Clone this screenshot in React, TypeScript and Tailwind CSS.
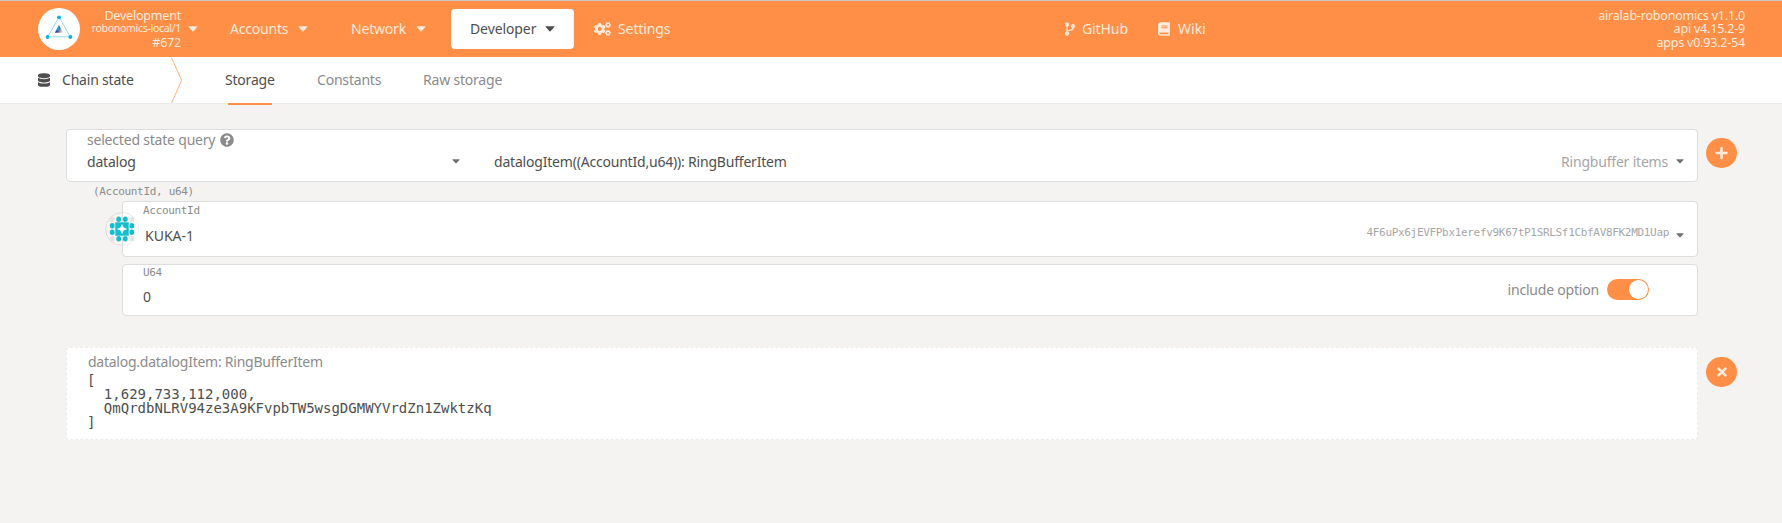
import React from 'react';
import { FaBook, FaCodeBranch, FaCogs, FaDatabase, FaPlus, FaQuestionCircle, FaTimes } from 'react-icons/fa';

function Caret({ className }: { className: string }) {
  return (
    <svg viewBox="0 0 10 6" className={`shrink-0 ${className}`} fill="currentColor">
      <path d="M0.9 0.3H9.1Q9.9 0.4 9.3 1.1L5.5 5.3Q5 5.8 4.5 5.3L0.7 1.1Q0.1 0.4 0.9 0.3Z" />
    </svg>
  );
}

function Logo() {
  return (
    <svg viewBox="0 0 42 42" className="h-[42px] w-[42px] shrink-0">
      <defs>
        <linearGradient id="peak" x1="0" y1="0" x2="1" y2="0.3">
          <stop offset="0" stopColor="#23375f" />
          <stop offset="0.5" stopColor="#44496f" />
          <stop offset="1" stopColor="#d9d0e4" />
        </linearGradient>
      </defs>
      <circle cx="21" cy="21" r="21" fill="#fff" />
      <path d="M21 9 L9.8 28.8 H32.2 Z" fill="none" stroke="#8fdcf5" strokeWidth="1" />
      <path d="M21 17.3 L16.8 24.7 H25.2 Z" fill="url(#peak)" />
      <path d="M21 17.3 L17.6 23.2 L21.2 22 Z" fill="#1f9fd8" />
      <circle cx="21" cy="9.3" r="1.9" fill="#03b1ea" />
      <circle cx="9.6" cy="29" r="1.9" fill="#03b1ea" />
      <circle cx="32.4" cy="29" r="1.9" fill="#03b1ea" />
    </svg>
  );
}

const IDENTICON_DOTS: [number, number, string][] = [
  [7.2, 7.2, '#e3e3e3'], [26.8, 7.2, '#e3e3e3'], [7.2, 26.8, '#e3e3e3'], [26.8, 26.8, '#e3e3e3'],
  [13.7, 7.2, '#12bfcd'], [20.3, 7.2, '#12bfcd'], [13.7, 26.8, '#12bfcd'], [20.3, 26.8, '#12bfcd'],
  [7.2, 13.7, '#12bfcd'], [7.2, 20.3, '#12bfcd'], [26.8, 13.7, '#12bfcd'], [26.8, 20.3, '#12bfcd'],
];

function Identicon() {
  return (
    <svg viewBox="0 0 34 34" className="absolute top-[10px] -left-[18px] h-[34px] w-[34px]">
      <circle cx="17" cy="17" r="16.4" fill="#f6f6f5" stroke="#dddddd" strokeWidth="1" />
      <path d="M17.5 1A16 16 0 0 1 17.5 33Z" fill="#fff" />
      <path d="M17.5 1V33" stroke="#dedede" />
      {IDENTICON_DOTS.map(([x, y, color]) => (
        <ellipse key={`${x}-${y}`} cx={x} cy={y} rx="2.4" ry="2.7" fill={color} />
      ))}
      <rect x="10.3" y="10.3" width="13.4" height="13.4" fill="#12bfcd" />
      <path d="M17 11.7 L18.6 15.4 L22.3 17 L18.6 18.6 L17 22.3 L15.4 18.6 L11.7 17 L15.4 15.4 Z" fill="#fff" />
    </svg>
  );
}

function Header() {
  return (
    <header className="flex h-[57px] items-center border-t border-[#c8c8c4] bg-[#ff8f47] pl-[38px] text-[#ffeadb]">
      <Logo />
      <div className="flex w-[101px] flex-col items-end text-right text-[12.5px] leading-[13.5px]">
        <span>Development</span>
        <span className="text-[10.5px] tracking-[-0.3px]">robonomics-local/1</span>
        <span>#672</span>
      </div>
      <Caret className="ml-[7px] h-[6px] w-[10px]" />
      <div className="ml-[32px] flex w-[121px] items-center">
        <span className="w-[68px]">Accounts</span>
        <Caret className="h-[6px] w-[10px]" />
      </div>
      <div className="flex w-[100px] items-center">
        <span className="w-[65px]">Network</span>
        <Caret className="h-[6px] w-[10px]" />
      </div>
      <div className="flex h-[40px] w-[123px] items-center rounded-[4px] bg-white pl-[19px] text-[#4e4e4e]">
        <span className="w-[75px] tracking-[-0.1px]">Developer</span>
        <Caret className="h-[6px] w-[10px]" />
      </div>
      <div className="ml-[20px] flex w-[471px] items-center">
        <FaCogs className="h-[14px] w-[17px]" />
        <span className="ml-[7px] tracking-[-0.1px]">Settings</span>
      </div>
      <div className="flex w-[93px] items-center">
        <FaCodeBranch className="h-[14px] w-[10px]" />
        <span className="ml-[7px] tracking-[-0.1px]">GitHub</span>
      </div>
      <div className="flex items-center">
        <FaBook className="h-[14px] w-[12px]" />
        <span className="ml-[8px] tracking-normal">Wiki</span>
      </div>
      <div className="mr-[37px] ml-auto flex flex-col text-right text-[12.5px] leading-[13.5px]">
        <span>airalab-robonomics v1.1.0</span>
        <span>api v4.15.2-9</span>
        <span>apps v0.93.2-54</span>
      </div>
    </header>
  );
}

function TabBar() {
  return (
    <nav className="flex h-[47px] items-stretch border-b border-[#ecebe9] bg-white text-[#8b8b8b]">
      <div className="flex w-[171px] items-center pl-[38px] text-[#4e4e4e]">
        <FaDatabase className="h-[14px] w-[12px]" />
        <span className="ml-[12px]">Chain state</span>
      </div>
      <svg viewBox="0 0 12 46" className="h-[46px] w-[12px]" fill="none">
        <path d="M0.5 0.8 L10.7 23.3 L0.5 46" stroke="#ffb27f" strokeWidth="1" />
      </svg>
      <div className="relative ml-[42px] flex w-[92px] items-center text-[#4e4e4e]">
        <span>Storage</span>
        <span className="absolute top-[46px] left-[3px] h-[2px] w-[44px] bg-[#ff8f47]" />
      </div>
      <div className="flex w-[106px] items-center">Constants</div>
      <div className="flex items-center">Raw storage</div>
    </nav>
  );
}

function RoundButton({ children }: { children: React.ReactNode }) {
  return (
    <button className="ml-[8px] flex h-[30px] w-[31px] shrink-0 items-center justify-center rounded-full bg-[#ff8f47] text-[#ffeadb]">
      {children}
    </button>
  );
}

function QueryRow() {
  return (
    <section className="flex items-start">
      <div className="flex h-[53px] w-[1632px] flex-col rounded-[4px] border border-[#dcdddd] bg-white pl-[20px]">
        <div className="flex h-[20px] items-center text-[#8b8b8b]">
          <span className="w-[133px]">selected state query</span>
          <FaQuestionCircle className="h-[14px] w-[14px]" />
        </div>
        <div className="flex h-[23px] items-center text-[#4e4e4e]">
          <span className="w-[365px]">datalog</span>
          <Caret className="h-[5px] w-[8px] text-[#707070]" />
          <span className="ml-[34px]">datalogItem((AccountId,u64)): RingBufferItem</span>
          <span className="ml-auto text-[#a6a6a6]">Ringbuffer items</span>
          <Caret className="mr-[13px] ml-[8px] h-[5px] w-[8px] text-[#707070]" />
        </div>
      </div>
      <div className="pt-[9px]">
        <RoundButton>
          <FaPlus className="h-[14px] w-[13px]" />
        </RoundButton>
      </div>
    </section>
  );
}

function Params() {
  return (
    <section className="w-[1632px]">
      <div className="flex h-[19px] items-center pl-[27px] font-['DejaVu_Sans_Mono',monospace] text-[11px] tracking-[-0.32px] text-[#8b8b8b]">
        (AccountId, u64)
      </div>
      <div className="flex flex-col gap-[7px] pl-[56px]">
        <div className="relative h-[56px] rounded-[4px] border border-[#dcdddd] bg-white pl-[20px]">
          <Identicon />
          <div className="flex h-[17px] items-center font-['DejaVu_Sans_Mono',monospace] text-[11px] tracking-[-0.32px] text-[#8b8b8b]">
            AccountId
          </div>
          <div className="flex h-[33px] items-center text-[#4e4e4e]">
            <span className="pl-[2px] tracking-normal">KUKA-1</span>
            <span className="mb-[5px] ml-auto font-['DejaVu_Sans_Mono',monospace] text-[11px] tracking-[-0.32px] text-[#a6a6a6]">
              4F6uPx6jEVFPbx1erefv9K67tP1SRLSf1CbfAV8FK2MD1Uap
            </span>
            <Caret className="mr-[13px] ml-[7px] h-[5px] w-[8px] text-[#707070]" />
          </div>
        </div>
        <div className="flex h-[52px] rounded-[4px] border border-[#dcdddd] bg-white pr-[48px] pl-[20px]">
          <div>
            <div className="flex h-[16px] items-center font-['DejaVu_Sans_Mono',monospace] text-[11px] tracking-[-0.32px] text-[#8b8b8b]">
              U64
            </div>
            <div className="flex h-[31px] items-center text-[#4e4e4e]">0</div>
          </div>
          <div className="ml-auto flex h-[49px] items-center text-[#8b8b8b]">
            <span>include option</span>
            <span className="ml-[8px] flex h-[21px] w-[42px] items-center justify-end rounded-full bg-[#ff8f47] pr-[1px]">
              <span className="h-[19px] w-[19px] rounded-full bg-white" />
            </span>
          </div>
        </div>
      </div>
    </section>
  );
}

function Result() {
  return (
    <section className="mt-[31px] flex items-start">
      <div className="h-[93px] w-[1632px] rounded-[4px] border border-dashed border-[#ebebe9] bg-white pl-[20px]">
        <div className="flex h-[25px] items-center pt-[2px] pl-[1px] tracking-[-0.25px] text-[#8b8b8b]">
          datalog.datalogItem: RingBufferItem
        </div>
        <pre className="font-['DejaVu_Sans_Mono',monospace] text-[14px] leading-[14px] tracking-normal text-[#4e4e4e]">
          {'[\n  1,629,733,112,000,\n  QmQrdbNLRV94ze3A9KFvpbTW5wsgDGMWYVrdZn1ZwktzKq\n]'}
        </pre>
      </div>
      <div className="pt-[10px]">
        <RoundButton>
          <FaTimes className="h-[14px] w-[10px]" />
        </RoundButton>
      </div>
    </section>
  );
}

export default function App() {
  return (
    <div className="h-[523px] w-[1782px] overflow-hidden bg-[#f4f3f1] font-['Noto_Sans',sans-serif] text-[14px] leading-[20px] tracking-[-0.2px] whitespace-nowrap">
      <Header />
      <TabBar />
      <main className="pt-[25px] pl-[66px]">
        <QueryRow />
        <Params />
        <Result />
      </main>
    </div>
  );
}
